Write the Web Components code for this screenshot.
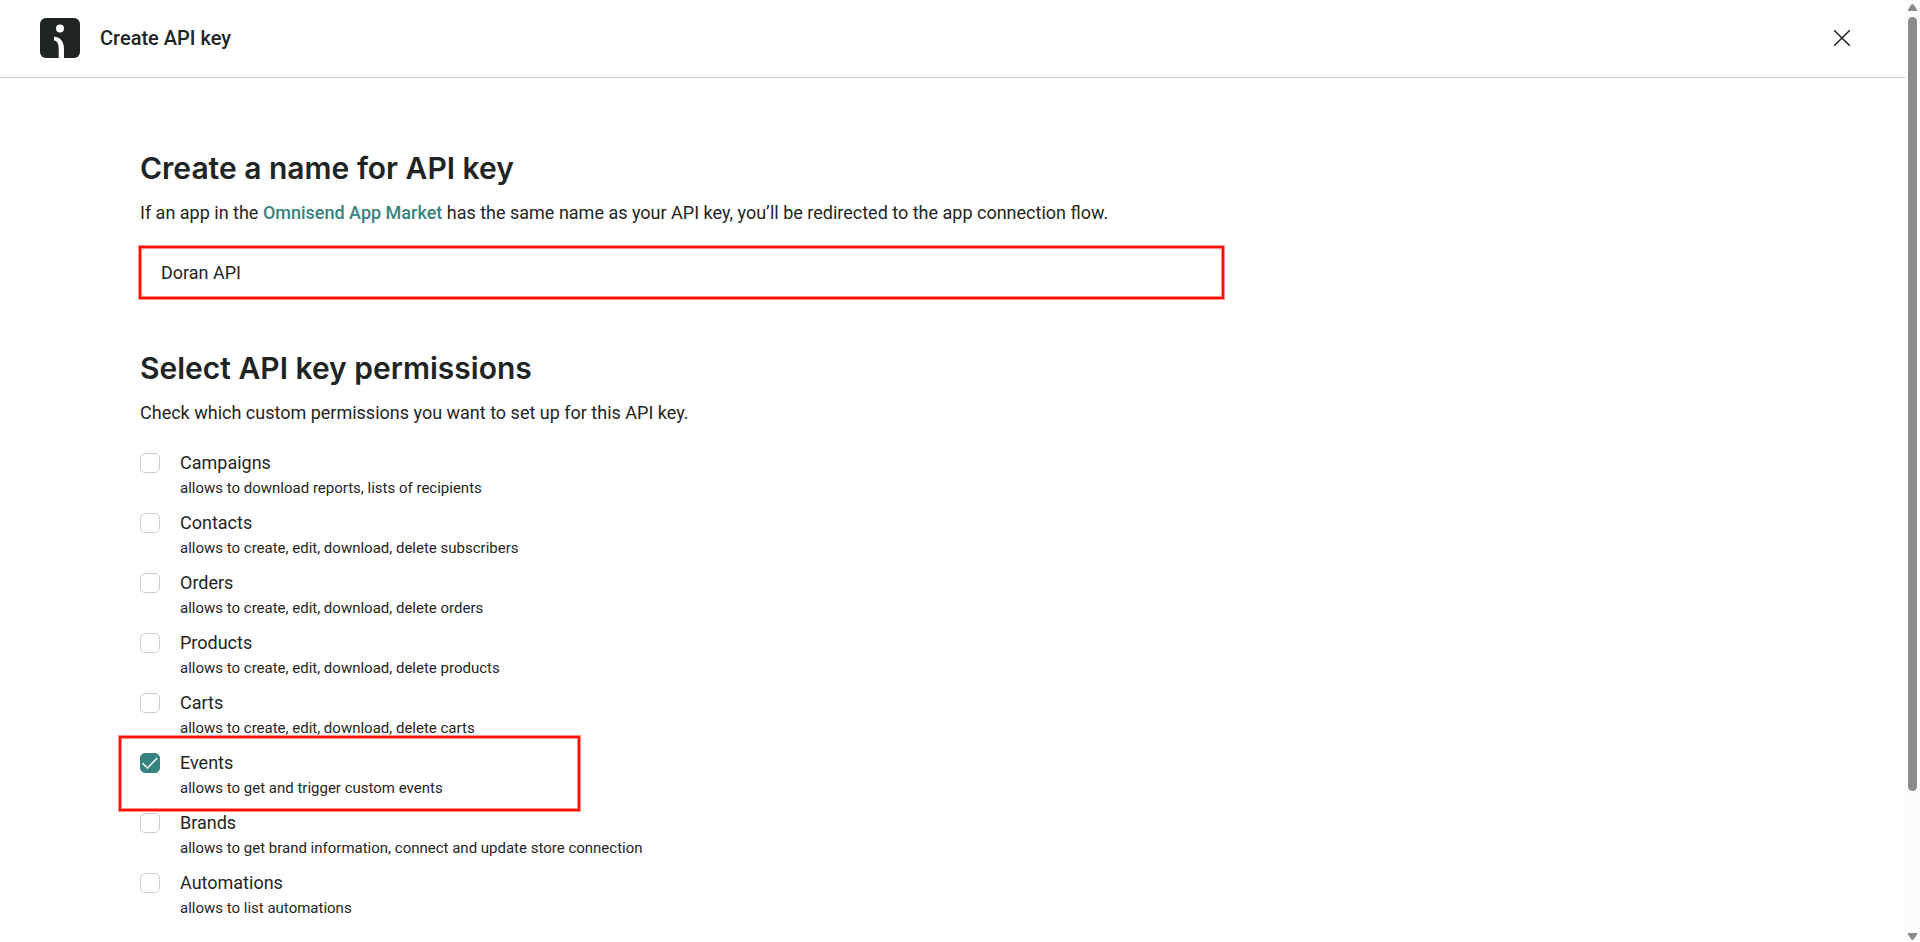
<!DOCTYPE html>
<html lang="en">
<head>
<meta charset="utf-8">
<meta name="viewport" content="width=device-width, initial-scale=1">
<title>Create API key</title>
<style>
body { margin: 0; background: #fff; color: #1f2525; font-family: Roboto, "Liberation Sans", sans-serif; }
</style>
</head>
<body>
<api-key-page></api-key-page>
<script>
function define(name, html, setup) {
  const template = document.createElement('template');
  template.innerHTML = html;
  customElements.define(name, class extends HTMLElement {
    connectedCallback() {
      if (this.shadowRoot) return;
      this.attachShadow({ mode: 'open' }).append(template.content.cloneNode(true));
      if (setup) setup(this, this.shadowRoot);
    }
  });
}

define('app-header', `
<style>
:host { display: block; }
header { display: flex; align-items: center; gap: 20px; box-sizing: border-box; height: 78px; padding: 0 51px 2px 40px; border-bottom: 1px solid #cbcccc; }
.logo { display: block; }
.title { flex: 1; font-size: 20px; line-height: 28px; font-weight: 500; }
button { display: grid; place-items: center; width: 24px; height: 24px; padding: 0; border: 0; background: none; color: inherit; cursor: pointer; }
</style>
<header>
  <svg class="logo" width="40" height="40" viewBox="0 0 40 40" aria-hidden="true">
    <rect width="40" height="40" rx="6" fill="#1f2525"/>
    <circle cx="20" cy="10.5" r="4" fill="#fff"/>
    <path d="M14 18.8C20.500 19.200 24 23.500 24 31V40H18.700V31C18.700 26 17.500 23.200 14 22.600Z" fill="#fff"/>
  </svg>
  <div class="title"><slot></slot></div>
  <button type="button" aria-label="Close">
    <svg width="24" height="24" viewBox="0 0 24 24" fill="none" stroke="currentColor" stroke-width="1.500"><path d="M4.200 4.200 19.800 19.800M19.800 4.200 4.200 19.800"/></svg>
  </button>
</header>`);

define('highlight-frame', `
<style>
:host { display: block; box-sizing: border-box; position: absolute; pointer-events: none; border: 1px solid #ff8f88; box-shadow: inset 0 0 0 2px #ff0f04, inset 0 0 0 3px #ff8f88; }
</style>`);

define('text-link', `
<style>
a { color: #37837f; font-weight: 500; text-decoration: none; }
</style>
<a href="#"><slot></slot></a>`);

define('form-section', `
<style>
:host { display: block; }
h2 { margin: 0 0 14px; font: 600 30px/34px Inter, "Liberation Sans", sans-serif; }
p { margin: 0 0 20px; font-size: 18px; line-height: 28px; }
</style>
<section>
  <h2></h2>
  <p><slot name="intro"></slot></p>
  <slot></slot>
</section>`, (host, root) => {
  root.querySelector('h2').textContent = host.getAttribute('heading');
});

define('name-field', `
<style>
:host { display: block; position: relative; }
input { display: block; box-sizing: border-box; width: 100%; height: 51px; padding: 0 20px; border: 1px solid #c8cfcf; border-radius: 8px; background: #fff; color: inherit; font: 18px/28px Roboto, "Liberation Sans", sans-serif; }
highlight-frame { inset: -2px; }
</style>
<input type="text" aria-label="API key name">
<highlight-frame></highlight-frame>`, (host, root) => {
  root.querySelector('input').value = host.getAttribute('value');
});

define('permission-list', `
<style>
:host { display: grid; padding-top: 2px; }
</style>
<slot></slot>`);

define('permission-option', `
<style>
:host { display: block; position: relative; }
label { display: grid; grid-template-columns: 20px auto; column-gap: 20px; width: fit-content; align-items: center; padding-bottom: 10px; cursor: pointer; }
input { appearance: none; box-sizing: border-box; width: 20px; height: 20px; margin: 0; border: 1px solid #c8cfcf; border-radius: 5px; background: #fff; }
input:checked { border-color: #37837f; background: #37837f; }
.box { position: relative; display: grid; }
.box svg { position: absolute; inset: 0; pointer-events: none; display: none; }
input:checked + svg { display: block; }
.name { font-size: 18px; line-height: 28px; }
.hint { grid-column: 2; font-size: 15px; line-height: 22px; }
highlight-frame { display: none; left: -22px; top: -14px; width: 463px; height: 77px; }
:host([marked]) highlight-frame { display: block; }
</style>
<label>
  <span class="box"><input type="checkbox"><svg width="20" height="20" viewBox="0 0 20 20" fill="none" stroke="#fff" stroke-width="1.500"><path d="M2.500 10.200 7.500 15 17.200 5"/></svg></span>
  <span class="name"></span>
  <span class="hint"><slot></slot></span>
</label>
<highlight-frame></highlight-frame>`, (host, root) => {
  root.querySelector('.name').textContent = host.getAttribute('name');
  root.querySelector('input').checked = host.hasAttribute('checked');
});

define('scroll-rail', `
<style>
:host { display: flex; flex-direction: column; align-items: center; justify-content: space-between; gap: 6px; position: sticky; top: 0; box-sizing: border-box; height: 100vh; padding: 4px 0 2px; background: #fcfcfc; }
svg { display: block; flex: none; }
.track { flex: 1; width: 9px; }
.thumb { height: 85%; border-radius: 5px; background: #8b8b8b; }
</style>
<svg width="9" height="7" viewBox="0 0 9 7" fill="#8b8b8b"><path d="M0 7V5.500L3.500.500Q4.500-.500 5.500.500L9 5.500V7Z"/></svg>
<div class="track"><div class="thumb"></div></div>
<svg width="9" height="7" viewBox="0 0 9 7" fill="#8b8b8b"><path d="M0 0V1.500L3.500 6.500Q4.500 7.500 5.500 6.500L9 1.500V0Z"/></svg>`);

define('api-key-page', `
<style>
:host { display: grid; grid-template-columns: minmax(0, 1fr) 15px; align-items: start; min-height: 100vh; }
main { display: grid; grid-template-columns: 2fr 1fr; padding: 73px 140px 12px; }
.form { display: grid; gap: 53px; min-width: 0; }
</style>
<div>
  <app-header>Create API key</app-header>
  <main>
    <div class="form">
      <form-section heading="Create a name for API key">
        <span slot="intro">If an app in the <text-link>Omnisend App Market</text-link> has the same name as your API key, you’ll be redirected to the app connection flow.</span>
        <name-field value="Doran API"></name-field>
      </form-section>
      <form-section heading="Select API key permissions">
        <span slot="intro">Check which custom permissions you want to set up for this API key.</span>
        <permission-list>
          <permission-option name="Campaigns">allows to download reports, lists of recipients</permission-option>
          <permission-option name="Contacts">allows to create, edit, download, delete subscribers</permission-option>
          <permission-option name="Orders">allows to create, edit, download, delete orders</permission-option>
          <permission-option name="Products">allows to create, edit, download, delete products</permission-option>
          <permission-option name="Carts">allows to create, edit, download, delete carts</permission-option>
          <permission-option name="Events" checked marked>allows to get and trigger custom events</permission-option>
          <permission-option name="Brands">allows to get brand information, connect and update store connection</permission-option>
          <permission-option name="Automations">allows to list automations</permission-option>
        </permission-list>
      </form-section>
    </div>
  </main>
</div>
<scroll-rail></scroll-rail>`);
</script>
</body>
</html>
